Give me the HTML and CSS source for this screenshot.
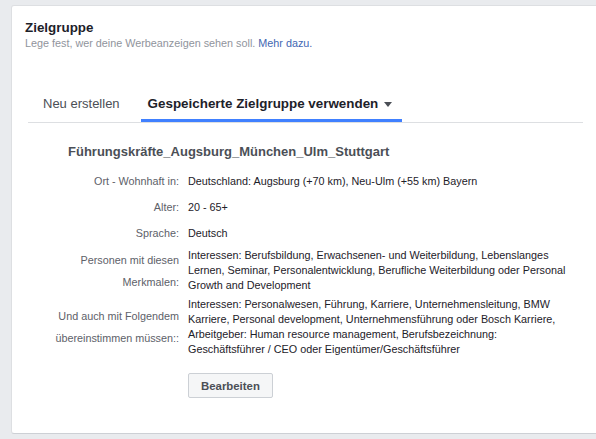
FILE: index.html
```html
<!DOCTYPE html>
<html lang="de">
<head>
<meta charset="utf-8">
<title>Zielgruppe</title>
<link rel="stylesheet" href="styles.css">
</head>
<body>
<div class="card">
  <div class="header">
    <div class="heading">Zielgruppe</div>
    <div class="sub">Lege fest, wer deine Werbeanzeigen sehen soll. <a class="link" href="#">Mehr dazu.</a></div>
  </div>
  <div class="tabs">
    <div class="tab">Neu erstellen</div>
    <div class="tab active">Gespeicherte Zielgruppe verwenden <span class="caret"></span></div>
  </div>
  <div class="saved">
    <div class="name">Führungskräfte_Augsburg_München_Ulm_Stuttgart</div>
    <table class="details">
      <tr>
        <td class="label">Ort - Wohnhaft in:</td>
        <td class="value">Deutschland: Augsburg (+70 km), Neu-Ulm (+55 km) Bayern</td>
      </tr>
      <tr>
        <td class="label">Alter:</td>
        <td class="value">20 - 65+</td>
      </tr>
      <tr>
        <td class="label">Sprache:</td>
        <td class="value">Deutsch</td>
      </tr>
      <tr>
        <td class="label">Personen mit diesen Merkmalen:</td>
        <td class="value">Interessen: Berufsbildung, Erwachsenen- und Weiterbildung, Lebenslanges Lernen, Seminar, Personalentwicklung, Berufliche Weiterbildung oder Personal Growth and Development</td>
      </tr>
      <tr>
        <td class="label">Und auch mit Folgendem übereinstimmen müssen::</td>
        <td class="value">Interessen: Personalwesen, Führung, Karriere, Unternehmensleitung, BMW Karriere, Personal development, Unternehmensführung oder Bosch Karriere, Arbeitgeber: Human resource management, Berufsbezeichnung: Geschäftsführer / CEO oder Eigentümer/Geschäftsführer</td>
      </tr>
      <tr>
        <td class="label"></td>
        <td class="value action"><button class="btn" type="button">Bearbeiten</button></td>
      </tr>
    </table>
  </div>
</div>
</body>
</html>
```
FILE: styles.css
```css
html, body {
  margin: 0;
  padding: 0;
}
body {
  background: #e9ebee;
  font-family: "Liberation Sans", Arial, sans-serif;
  overflow: hidden;
  width: 596px;
  height: 439px;
}
.card {
  margin: 5px 0 0 11px;
  width: 587px;
  background: #fff;
  border: 1px solid #dddfe2;
  border-bottom-color: #cdd0d5;
  border-radius: 3px;
  padding-bottom: 33px;
}
.header {
  padding: 14px 13px 0;
}
.heading {
  font-size: 13.4px;
  line-height: 16px;
  font-weight: bold;
  color: #1d2129;
}
.sub {
  font-size: 10.8px;
  line-height: 14px;
  color: #90949c;
}
.link {
  color: #4267b2;
  text-decoration: none;
}
.tabs {
  display: flex;
  gap: 14px;
  margin: 37px 16px 0;
  padding-left: 8px;
  border-bottom: 1px solid #dddfe2;
}
.tab {
  display: flex;
  align-items: center;
  height: 32px;
  padding: 0 7px;
  border-bottom: 3px solid transparent;
  font-size: 13px;
  color: #4b4f56;
  white-space: nowrap;
}
.tab.active {
  font-size: 13.4px;
  font-weight: bold;
  color: #1d2129;
  border-bottom-color: #4080ff;
  padding-right: 10px;
}
.caret {
  width: 0;
  height: 0;
  margin-left: 6px;
  margin-top: 2px;
  border-left: 4.5px solid transparent;
  border-right: 4.5px solid transparent;
  border-top: 5px solid #4b4f56;
}
.saved {
  padding: 21px 0 0 56px;
}
.name {
  font-size: 13px;
  line-height: 16px;
  font-weight: bold;
  color: #4b4f56;
}
.details {
  border-collapse: collapse;
  margin: 8px 0 0 -16px;
}
.details td {
  padding: 2px 0;
  vertical-align: middle;
}
.label {
  width: 127px;
  padding-right: 9px !important;
  text-align: right;
  font-size: 10.8px;
  line-height: 22px;
  color: #5d6169;
}
.value {
  width: 388px;
  font-size: 10.8px;
  line-height: 15px;
  color: #1d2129;
}
.value.action {
  padding-top: 14px;
}
.btn {
  height: 25px;
  padding: 0 12px;
  background: #f5f6f7;
  border: 1px solid #ccd0d5;
  border-radius: 2px;
  font-family: "Liberation Sans", Arial, sans-serif;
  font-size: 11.4px;
  font-weight: bold;
  color: #4b4f56;
}
```
